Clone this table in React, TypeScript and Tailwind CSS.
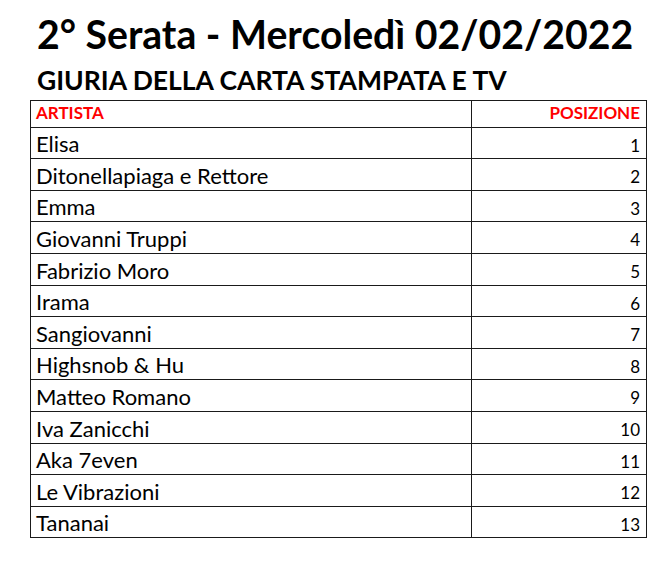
import React from "react";

const rows: [string, number][] = [
  ["Elisa", 1],
  ["Ditonellapiaga e Rettore", 2],
  ["Emma", 3],
  ["Giovanni Truppi", 4],
  ["Fabrizio Moro", 5],
  ["Irama", 6],
  ["Sangiovanni", 7],
  ["Highsnob & Hu", 8],
  ["Matteo Romano", 9],
  ["Iva Zanicchi", 10],
  ["Aka 7even", 11],
  ["Le Vibrazioni", 12],
  ["Tananai", 13],
];

export default function App() {
  return (
    <div
      className="w-[669px] h-[563px] bg-white text-black"
      style={{ fontFamily: "Lato, 'Open Sans', sans-serif" }}
    >
      <div className="pt-[10px] pl-[37px]">
        <h1 className="text-[39.2px] leading-[48px] font-bold">
          2° Serata - Mercoledì 02/02/2022
        </h1>
        <h2 className="mt-[7px] text-[26.5px] leading-[30px] font-bold">
          GIURIA DELLA CARTA STAMPATA E TV
        </h2>
      </div>
      <div className="mt-[5px] ml-[30px] w-[617px] border-t border-l border-[#1a1a1a]">
        <div className="flex h-[26.6px] border-b border-[#1a1a1a]">
          <div className="w-[441px] border-r border-[#1a1a1a] flex items-end pl-[5px] pb-[3.5px] text-[17px] leading-[20px] font-bold text-[#ff0000]">
            ARTISTA
          </div>
          <div className="flex-1 border-r border-[#1a1a1a] flex items-end justify-end pr-[6px] pb-[3.5px] text-[17px] leading-[20px] font-bold text-[#ff0000]">
            POSIZIONE
          </div>
        </div>
        {rows.map(([name, pos]) => (
          <div key={name} className="flex h-[31.6px] border-b border-[#1a1a1a]">
            <div className="w-[441px] border-r border-[#1a1a1a] flex items-end pl-[5px] pb-[4px] text-[22px] leading-[20px]">
              {name}
            </div>
            <div className="flex-1 border-r border-[#1a1a1a] flex items-end justify-end pr-[6px] pb-[2.5px] text-[17px] leading-[20px]">
              {pos}
            </div>
          </div>
        ))}
      </div>
    </div>
  );
}
